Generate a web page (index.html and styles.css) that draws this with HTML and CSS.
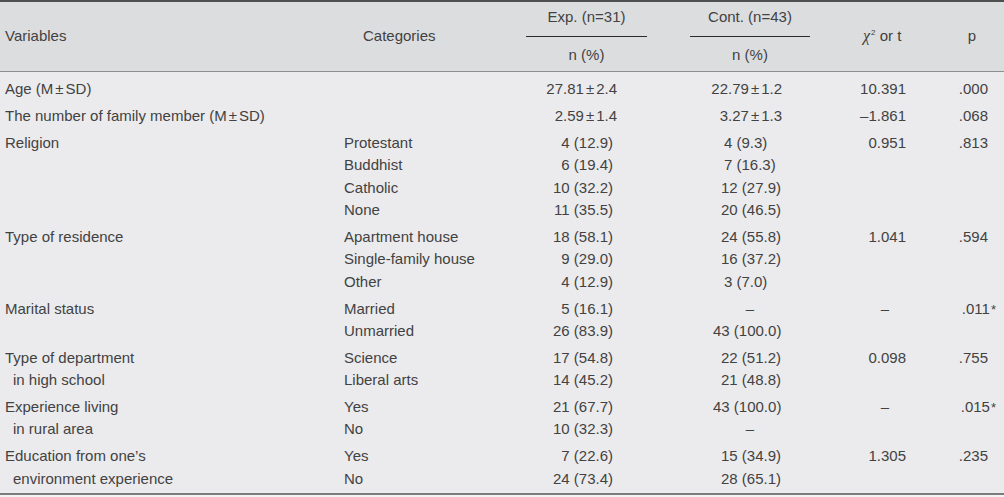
FILE: index.html
```html
<!DOCTYPE html>
<html lang="en">
<head>
<meta charset="utf-8">
<title>Table</title>
<link rel="stylesheet" href="styles.css">
</head>
<body>
<div class="table">
  <div class="thead">
    <div class="h-var">Variables</div>
    <div class="h-cat">Categories</div>
    <div class="h-grp h-exp">
      <div class="h-top">Exp. (n=31)</div>
      <div class="h-sub">n (%)</div>
    </div>
    <div class="h-grp h-cont">
      <div class="h-top">Cont. (n=43)</div>
      <div class="h-sub">n (%)</div>
    </div>
    <div class="h-chi"><i class="chi">χ</i><sup>2</sup> or t</div>
    <div class="h-p">p</div>
  </div>

  <div class="tbody">
    <div class="row">
      <div class="c-var"><div>Age (M<span class="pm">±</span>SD)</div></div>
      <div class="c-cat"></div>
      <div class="c-exp"><div class="emean">27.81<span class="pm">±</span>2.4</div></div>
      <div class="c-cont"><div class="mean">22.79<span class="pm">±</span>1.2</div></div>
      <div class="c-chi"><div>10.391</div></div>
      <div class="c-p"><div>.000</div></div>
    </div>

    <div class="row">
      <div class="c-var"><div>The number of family member (M<span class="pm">±</span>SD)</div></div>
      <div class="c-cat"></div>
      <div class="c-exp"><div class="emean">2.59<span class="pm">±</span>1.4</div></div>
      <div class="c-cont"><div class="mean">3.27<span class="pm">±</span>1.3</div></div>
      <div class="c-chi"><div>–1.861</div></div>
      <div class="c-p"><div>.068</div></div>
    </div>

    <div class="row">
      <div class="c-var"><div>Religion</div></div>
      <div class="c-cat"><div>Protestant</div><div>Buddhist</div><div>Catholic</div><div>None</div></div>
      <div class="c-exp"><div>4 (12.9)</div><div>6 (19.4)</div><div>10 (32.2)</div><div>11 (35.5)</div></div>
      <div class="c-cont"><div class="cnt one">4 (9.3)</div><div class="cnt one">7 (16.3)</div><div class="cnt">12 (27.9)</div><div class="cnt">20 (46.5)</div></div>
      <div class="c-chi"><div>0.951</div></div>
      <div class="c-p"><div>.813</div></div>
    </div>

    <div class="row">
      <div class="c-var"><div>Type of residence</div></div>
      <div class="c-cat"><div>Apartment house</div><div>Single-family house</div><div>Other</div></div>
      <div class="c-exp"><div>18 (58.1)</div><div>9 (29.0)</div><div>4 (12.9)</div></div>
      <div class="c-cont"><div class="cnt">24 (55.8)</div><div class="cnt">16 (37.2)</div><div class="cnt one">3 (7.0)</div></div>
      <div class="c-chi"><div>1.041</div></div>
      <div class="c-p"><div>.594</div></div>
    </div>

    <div class="row">
      <div class="c-var"><div>Marital status</div></div>
      <div class="c-cat"><div>Married</div><div>Unmarried</div></div>
      <div class="c-exp"><div>5 (16.1)</div><div>26 (83.9)</div></div>
      <div class="c-cont"><div class="dash">–</div><div class="cnt wide">43 (100.0)</div></div>
      <div class="c-chi"><div class="dash">–</div></div>
      <div class="c-p"><div>.011<span class="star">*</span></div></div>
    </div>

    <div class="row">
      <div class="c-var"><div>Type of department</div><div class="indent">in high school</div></div>
      <div class="c-cat"><div>Science</div><div>Liberal arts</div></div>
      <div class="c-exp"><div>17 (54.8)</div><div>14 (45.2)</div></div>
      <div class="c-cont"><div class="cnt">22 (51.2)</div><div class="cnt">21 (48.8)</div></div>
      <div class="c-chi"><div>0.098</div></div>
      <div class="c-p"><div>.755</div></div>
    </div>

    <div class="row">
      <div class="c-var"><div>Experience living</div><div class="indent">in rural area</div></div>
      <div class="c-cat"><div>Yes</div><div>No</div></div>
      <div class="c-exp"><div>21 (67.7)</div><div>10 (32.3)</div></div>
      <div class="c-cont"><div class="cnt wide">43 (100.0)</div><div class="dash">–</div></div>
      <div class="c-chi"><div class="dash">–</div></div>
      <div class="c-p"><div>.015<span class="star">*</span></div></div>
    </div>

    <div class="row">
      <div class="c-var"><div>Education from one’s</div><div class="indent">environment experience</div></div>
      <div class="c-cat"><div>Yes</div><div>No</div></div>
      <div class="c-exp"><div>7 (22.6)</div><div>24 (73.4)</div></div>
      <div class="c-cont"><div class="cnt">15 (34.9)</div><div class="cnt">28 (65.1)</div></div>
      <div class="c-chi"><div>1.305</div></div>
      <div class="c-p"><div>.235</div></div>
    </div>
  </div>
</div>
</body>
</html>
```

FILE: styles.css
```css
* {
  box-sizing: border-box;
}

html, body {
  margin: 0;
  padding: 0;
  background: #f4f4f5;
}

body {
  width: 1004px;
  height: 497px;
  overflow: hidden;
  font-family: "Liberation Sans", Arial, sans-serif;
  font-size: 15px;
  color: #424242;
}

.table {
  width: 1004px;
  border-top: 2px solid #4f4f4f;
  border-bottom: 2px solid #7c7c7c;
}

.thead,
.row {
  display: grid;
  grid-template-columns: 340px 180px 140px 180px 90px 74px;
}

.thead {
  height: 70px;
  background: #dcdddf;
  border-bottom: 1px solid #8e8e8e;
  line-height: 22.4px;
}

.h-var,
.h-cat,
.h-chi,
.h-p {
  align-self: center;
  padding-bottom: 1px;
}

.h-var {
  padding-left: 5px;
}

.h-cat {
  padding-left: 23px;
}

.h-grp {
  padding-top: 4.3px;
  text-align: center;
}

.h-exp {
  padding-left: 6px;
  padding-right: 13px;
}

.h-cont {
  padding-left: 30px;
  padding-right: 30px;
}

.h-top {
  padding-bottom: 7.4px;
  border-bottom: 1px solid #2a2a2a;
}

.h-sub {
  padding-top: 6.6px;
}

.h-chi {
  padding-left: 23px;
}

.chi {
  font-family: "Liberation Serif", serif;
  font-size: 16px;
}

sup {
  font-size: 8px;
  line-height: 0;
  vertical-align: 6px;
  margin-left: 1px;
}

.h-p {
  text-align: center;
  padding-left: 10px;
}

.tbody {
  background: #ebebed;
  padding-top: 4.3px;
  padding-bottom: 0.6px;
}

.row {
  padding: 2.2px 0;
  line-height: 22.4px;
  white-space: nowrap;
}

.c-var {
  padding-left: 5px;
}

.indent {
  padding-left: 8px;
}

.c-cat {
  padding-left: 4px;
}

.pm {
  margin: 0 2px;
}

.c-exp {
  text-align: right;
  padding-right: 47px;
}

.c-exp .emean {
  margin-right: -4px;
}

.c-cont {
  text-align: left;
}

.cnt {
  padding-left: 61px;
}

.cnt.one {
  padding-left: 64px;
}

.cnt.wide {
  padding-left: 53px;
}

.dash {
  text-align: center;
}

.mean {
  text-align: right;
  padding-right: 58px;
}

.c-chi {
  text-align: right;
  padding-right: 24px;
}

.c-chi .dash {
  text-align: center;
  padding-left: 24px;
}

.c-p {
  text-align: right;
  padding-right: 16px;
}

.star {
  font-size: 13px;
  margin-left: 1px;
  margin-right: -8px;
}
```
